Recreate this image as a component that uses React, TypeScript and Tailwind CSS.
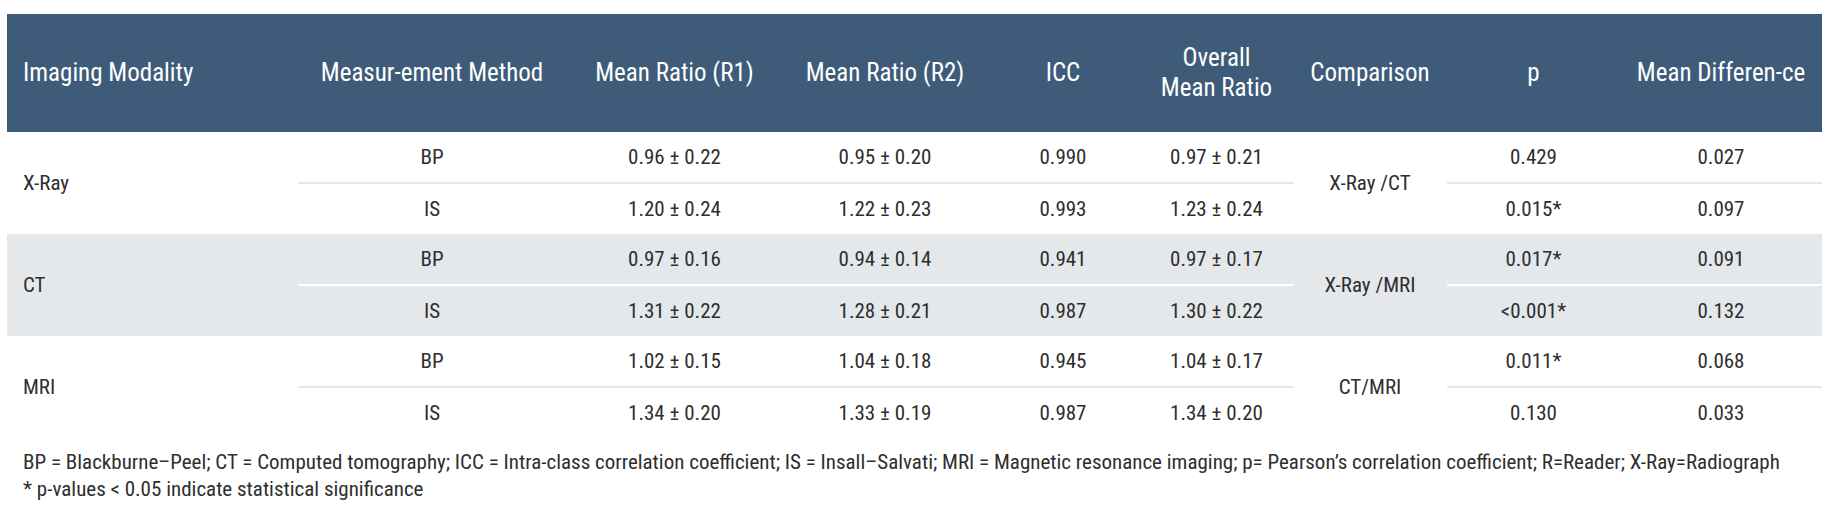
type Row = { method: string; r1: string; r2: string; icc: string; overall: string; p: string; diff: string };
type Group = { modality: string; comparison: string; shaded: boolean; rows: [Row, Row] };

const GROUPS: Group[] = [
  {
    modality: "X-Ray",
    comparison: "X-Ray /CT",
    shaded: false,
    rows: [
      { method: "BP", r1: "0.96 ± 0.22", r2: "0.95 ± 0.20", icc: "0.990", overall: "0.97 ± 0.21", p: "0.429", diff: "0.027" },
      { method: "IS", r1: "1.20 ± 0.24", r2: "1.22 ± 0.23", icc: "0.993", overall: "1.23 ± 0.24", p: "0.015*", diff: "0.097" },
    ],
  },
  {
    modality: "CT",
    comparison: "X-Ray /MRI",
    shaded: true,
    rows: [
      { method: "BP", r1: "0.97 ± 0.16", r2: "0.94 ± 0.14", icc: "0.941", overall: "0.97 ± 0.17", p: "0.017*", diff: "0.091" },
      { method: "IS", r1: "1.31 ± 0.22", r2: "1.28 ± 0.21", icc: "0.987", overall: "1.30 ± 0.22", p: "<0.001*", diff: "0.132" },
    ],
  },
  {
    modality: "MRI",
    comparison: "CT/MRI",
    shaded: false,
    rows: [
      { method: "BP", r1: "1.02 ± 0.15", r2: "1.04 ± 0.18", icc: "0.945", overall: "1.04 ± 0.17", p: "0.011*", diff: "0.068" },
      { method: "IS", r1: "1.34 ± 0.20", r2: "1.33 ± 0.19", icc: "0.987", overall: "1.34 ± 0.20", p: "0.130", diff: "0.033" },
    ],
  },
];

function GroupRows({ group }: { group: Group }) {
  const [bp, is] = group.rows;
  const bg = group.shaded ? "bg-[#e4e8eb]" : "bg-white";
  const line = group.shaded ? "border-b-2 border-white" : "border-b-2 border-[#e4e8eb]";
  const cell = "h-[51px] p-0 text-center align-middle";
  return (
    <>
      <tr className={bg}>
        <td rowSpan={2} className="pl-4 text-left align-middle">
          {group.modality}
        </td>
        <td className={`${cell} ${line}`}>{bp.method}</td>
        <td className={`${cell} ${line}`}>{bp.r1}</td>
        <td className={`${cell} ${line}`}>{bp.r2}</td>
        <td className={`${cell} ${line}`}>{bp.icc}</td>
        <td className={`${cell} ${line}`}>{bp.overall}</td>
        <td rowSpan={2} className="text-center align-middle">
          {group.comparison}
        </td>
        <td className={`${cell} ${line}`}>{bp.p}</td>
        <td className={`${cell} ${line}`}>{bp.diff}</td>
      </tr>
      <tr className={bg}>
        <td className={cell}>{is.method}</td>
        <td className={cell}>{is.r1}</td>
        <td className={cell}>{is.r2}</td>
        <td className={cell}>{is.icc}</td>
        <td className={cell}>{is.overall}</td>
        <td className={cell}>{is.p}</td>
        <td className={cell}>{is.diff}</td>
      </tr>
    </>
  );
}

export default function App() {
  return (
    <div className="bg-white px-[7px] pt-[14px] font-['Roboto_Condensed',_'Liberation_Sans',_sans-serif] text-[#2e2e2e]">
      <table className="w-[1815px] table-fixed border-collapse text-[21px] leading-tight">
        <colgroup>
          <col className="w-[292px]" />
          <col className="w-[266px]" />
          <col className="w-[219px]" />
          <col className="w-[202px]" />
          <col className="w-[154px]" />
          <col className="w-[153px]" />
          <col className="w-[154px]" />
          <col className="w-[173px]" />
          <col className="w-[202px]" />
        </colgroup>
        <thead>
          <tr className="h-[118px] bg-[#3e5c7a] text-[25px] leading-[30px] text-white">
            <th className="pl-4 text-left font-normal">Imaging Modality</th>
            <th className="font-normal">Measur-ement Method</th>
            <th className="font-normal">Mean Ratio (R1)</th>
            <th className="font-normal">Mean Ratio (R2)</th>
            <th className="font-normal">ICC</th>
            <th className="font-normal">
              Overall
              <br />
              Mean Ratio
            </th>
            <th className="font-normal">Comparison</th>
            <th className="font-normal">p</th>
            <th className="font-normal">Mean Differen-ce</th>
          </tr>
        </thead>
        <tbody>
          {GROUPS.map((g) => (
            <GroupRows key={g.modality} group={g} />
          ))}
        </tbody>
      </table>
      <div className="mt-[11px] pl-4 text-[21px] leading-[27px]">
        <p>
          BP = Blackburne–Peel; CT = Computed tomography; ICC = Intra-class correlation coefficient; IS = Insall–Salvati; MRI =
          Magnetic resonance imaging; p= Pearson’s correlation coefficient; R=Reader; X-Ray=Radiograph
        </p>
        <p>* p-values &lt; 0.05 indicate statistical significance</p>
      </div>
    </div>
  );
}
